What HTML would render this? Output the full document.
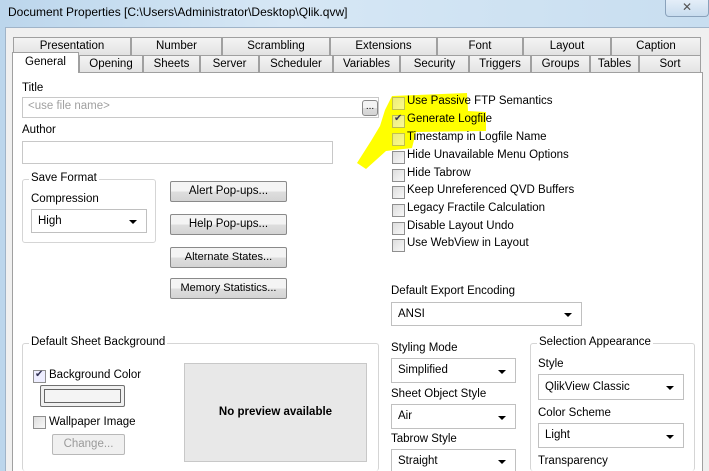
<!DOCTYPE html>
<html style="overflow:hidden;width:709px;height:471px"><head><meta charset="utf-8"><style>
*{box-sizing:border-box;margin:0;padding:0}
body{width:709px;height:471px;overflow:hidden;position:relative;font-family:"Liberation Sans",sans-serif;font-size:11.5px;color:#000;background:linear-gradient(90deg,#bcd6ec,#d6e7f5 40%,#c8def0)}
.a{position:absolute;white-space:nowrap}
.dlg{position:absolute;left:5px;top:27px;width:704px;height:444px;background:#f0f0f0;border-top:1px solid #a0b4c8;border-left:1px solid #a0b4c8}
.panel{position:absolute;left:12px;top:72px;width:691px;height:399px;background:#fff;border:1px solid #a0a0a0;border-bottom:none}
.tab{position:absolute;height:18px;border:1px solid #a0a0a0;border-bottom:none;background:linear-gradient(#f4f4f4,#e2e2e2);text-align:center;line-height:17px;font-size:11.5px}
.box{position:absolute;background:#fff;border:1px solid #c8c8c8}
.btn{position:absolute;border:1px solid #8a8a8a;border-radius:2px;background:linear-gradient(#f4f4f4 50%,#dedede 50%,#d4d4d4);text-align:center;font-size:11.5px}
.cb{position:absolute;width:13px;height:13px;border:1px solid #8f8f8f;background:linear-gradient(135deg,#ddd,#f8f8f8)}
.sel{position:absolute;background:#fff;border:1px solid #c0c0c0;padding-left:6px;font-size:11.5px}
.sel:after{content:"";position:absolute;right:9px;top:50%;margin-top:-1px;border-left:4px solid transparent;border-right:4px solid transparent;border-top:4px solid #000}
.grp{position:absolute;border:1px solid #d5d5d5;border-radius:3px;border-bottom:none}
.gl{position:absolute;background:#fff;padding:0 2px;top:-8px;left:6px}
</style></head><body>
<div class="a" style="left:8px;top:5px;font-size:12px">Document Properties [C:\Users\Administrator\Desktop\Qlik.qvw]</div>
<div class="a" style="left:665px;top:0;width:44px;height:17px;border:1px solid #8aa2bb;border-top:none;border-radius:0 0 4px 4px;background:linear-gradient(#e4eef8,#c8dcee);text-align:center;color:#555;font-size:12px;line-height:15px">✕</div>
<div class="dlg"></div>
<div class="tab" style="left:13px;top:37px;width:118px">Presentation</div>
<div class="tab" style="left:131px;top:37px;width:91px">Number</div>
<div class="tab" style="left:222px;top:37px;width:108px">Scrambling</div>
<div class="tab" style="left:330px;top:37px;width:107px">Extensions</div>
<div class="tab" style="left:437px;top:37px;width:86px">Font</div>
<div class="tab" style="left:523px;top:37px;width:88px">Layout</div>
<div class="tab" style="left:611px;top:37px;width:90px">Caption</div>
<div class="tab" style="left:79px;top:55px;width:64px">Opening</div>
<div class="tab" style="left:143px;top:55px;width:57px">Sheets</div>
<div class="tab" style="left:200px;top:55px;width:59px">Server</div>
<div class="tab" style="left:259px;top:55px;width:74px">Scheduler</div>
<div class="tab" style="left:333px;top:55px;width:67px">Variables</div>
<div class="tab" style="left:400px;top:55px;width:69px">Security</div>
<div class="tab" style="left:469px;top:55px;width:62px">Triggers</div>
<div class="tab" style="left:531px;top:55px;width:59px">Groups</div>
<div class="tab" style="left:590px;top:55px;width:49px">Tables</div>
<div class="tab" style="left:639px;top:55px;width:62px">Sort</div>
<div class="panel"></div>
<div class="tab" style="left:12px;top:52px;width:67px;height:21px;background:#fff;z-index:2;line-height:18px;border-bottom:none">General</div>

<div class="a" style="left:22px;top:82px">Title</div>
<div class="box" style="left:22px;top:97px;width:357px;height:21px;color:#a0a0a0;padding:2px 5px">&lt;use file name&gt;</div>
<div class="btn" style="left:362px;top:100px;width:16px;height:16px;font-size:10px;line-height:12px;border-radius:3px">...</div>
<div class="a" style="left:22px;top:124px">Author</div>
<div class="box" style="left:22px;top:141px;width:311px;height:23px"></div>

<div class="grp" style="left:22px;top:179px;width:134px;height:64px;border-bottom:1px solid #d5d5d5"><div class="gl">Save Format</div></div>
<div class="a" style="left:31px;top:193px">Compression</div>
<div class="sel" style="left:31px;top:209px;width:116px;height:24px;line-height:22px">High</div>

<div class="btn" style="left:170px;top:181px;width:117px;height:21px;line-height:19px">Alert Pop-ups...</div>
<div class="btn" style="left:170px;top:214px;width:117px;height:21px;line-height:19px">Help Pop-ups...</div>
<div class="btn" style="left:170px;top:247px;width:117px;height:21px;line-height:19px;font-size:11px">Alternate States...</div>
<div class="btn" style="left:170px;top:278px;width:117px;height:21px;line-height:19px;font-size:11px">Memory Statistics...</div>

<svg class="a" style="left:0;top:0" width="709" height="471"><path d="M392 96 L467 93 L468 111 L486 112 L486 131 L416 132 L412 148 L386 151 L366 169 L357 163 L371 141 L380 126 L385 110 L390 100Z" fill="#ffff00"/></svg>
<div class="cb" style="left:392px;top:97px;opacity:.55"></div><div class="a" style="left:407px;top:95px">Use Passive FTP Semantics</div>
<div class="cb" style="left:392px;top:115px;opacity:.6"></div><div class="a" style="left:394px;top:113px;font-size:10px;color:#335">✔</div><div class="a" style="left:407px;top:113px">Generate Logfile</div>
<div class="cb" style="left:392px;top:133px;opacity:.55"></div><div class="a" style="left:407px;top:131px">Timestamp in Logfile Name</div>
<div class="cb" style="left:392px;top:151px"></div><div class="a" style="left:407px;top:149px">Hide Unavailable Menu Options</div>
<div class="cb" style="left:392px;top:169px"></div><div class="a" style="left:407px;top:167px">Hide Tabrow</div>
<div class="cb" style="left:392px;top:186px"></div><div class="a" style="left:407px;top:184px">Keep Unreferenced QVD Buffers</div>
<div class="cb" style="left:392px;top:204px"></div><div class="a" style="left:407px;top:202px">Legacy Fractile Calculation</div>
<div class="cb" style="left:392px;top:222px"></div><div class="a" style="left:407px;top:220px">Disable Layout Undo</div>
<div class="cb" style="left:392px;top:239px"></div><div class="a" style="left:407px;top:237px">Use WebView in Layout</div>

<div class="a" style="left:391px;top:285px">Default Export Encoding</div>
<div class="sel" style="left:391px;top:302px;width:191px;height:24px;line-height:22px">ANSI</div>

<div class="grp" style="left:22px;top:343px;width:357px;height:128px"><div class="gl">Default Sheet Background</div></div>
<div class="cb" style="left:33px;top:370px;background:#eef"></div><div class="a" style="left:35px;top:369px;font-size:10px;color:#335">✔</div><div class="a" style="left:49px;top:369px">Background Color</div>
<div class="btn" style="left:40px;top:385px;width:85px;height:22px;background:#f0f0f0;border-color:#707070"><div style="margin:3px;height:14px;border:1px solid #666;background:#f4f4f4"></div></div>
<div class="cb" style="left:33px;top:416px"></div><div class="a" style="left:49px;top:416px">Wallpaper Image</div>
<div class="btn" style="left:52px;top:434px;width:73px;height:21px;line-height:19px;color:#9a9a9a;border-color:#b8b8b8;background:#f0f0f0">Change...</div>
<div class="a" style="left:184px;top:363px;width:183px;height:99px;background:#e8e8e8;border:1px solid #c8c8c8;text-align:center;line-height:97px;font-weight:bold;font-size:11.5px">No preview available</div>

<div class="a" style="left:391px;top:342px">Styling Mode</div>
<div class="sel" style="left:391px;top:358px;width:125px;height:25px;line-height:23px">Simplified</div>
<div class="a" style="left:391px;top:388px">Sheet Object Style</div>
<div class="sel" style="left:391px;top:404px;width:125px;height:25px;line-height:23px">Air</div>
<div class="a" style="left:391px;top:433px">Tabrow Style</div>
<div class="sel" style="left:391px;top:449px;width:125px;height:22px;line-height:23px;border-bottom:none">Straight</div>

<div class="grp" style="left:530px;top:343px;width:165px;height:128px"><div class="gl">Selection Appearance</div></div>
<div class="a" style="left:538px;top:358px">Style</div>
<div class="sel" style="left:538px;top:374px;width:146px;height:26px;line-height:24px">QlikView Classic</div>
<div class="a" style="left:538px;top:407px">Color Scheme</div>
<div class="sel" style="left:538px;top:423px;width:146px;height:25px;line-height:23px">Light</div>
<div class="a" style="left:538px;top:455px">Transparency</div>
</body></html>
